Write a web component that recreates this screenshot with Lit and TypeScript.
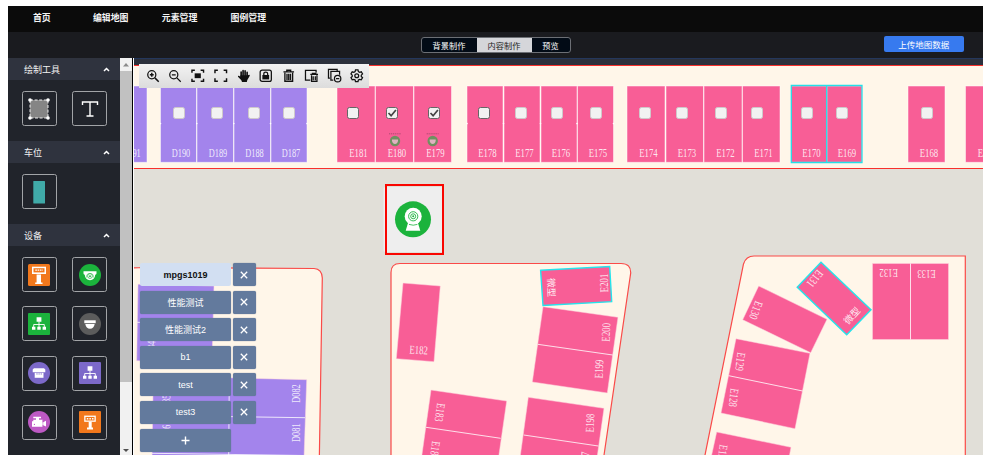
import { LitElement, html, svg, css, TemplateResult, SVGTemplateResult } from "lit";
import { customElement, state } from "lit/decorators.js";
import { classMap } from "lit/directives/class-map.js";

type Pt = [number, number];
interface Label { text: string; x: number; y: number; angle: number }
interface Check { x: number; enabled?: boolean; checked?: boolean }

const PINK = "#f85e96";
const VIOLET = "#a384ec";

/* ---------- device and tool glyphs, all drawn on a 22 x 22 grid ---------- */
const kiosk = svg`<rect width="22" height="22" rx="1.5" fill="#f2781c"/>
  <path d="M4 2.7h14v7.3H4z" fill="#fff"/><path d="M5.5 4.2h11v4.2h-11z" fill="#f2781c"/>
  <path d="M7.3 6.2h7.5" stroke="#fff" stroke-width="1.3" stroke-dasharray="1.6 .7"/>
  <path d="M8.6 10.6h4.4v7.800H14.500v1.700H7.200v-1.700h1.400z" fill="#fff"/>`;
const kiosk2 = svg`<rect width="22" height="22" rx="1" fill="#f2781c"/>
  <path d="M5.2 4.6h11.6v6.2H5.2z" fill="#fff"/><path d="M6.5 5.9h9v3.6h-9z" fill="#f2781c"/>
  <path d="M7.8 7.7h6.8" stroke="#fff" stroke-width="1.4" stroke-dasharray="1.5 1.1"/>
  <path d="M9.7 10.8h3v5.7h1.3v2H8v-2h1.7z" fill="#fff"/>`;
const network = (bg: string) => svg`<rect width="22" height="22" rx="1" fill="${bg}"/>
  <path d="M8.6 4.2h4.8v4.600H8.600zM4 13.700h3.400v3.100H4zM9.300 13.700h3.400v3.100H9.300zM14.600 13.700H18v3.100h-3.400z" fill="#fff"/>
  <path d="M11 8.500v5.500M5.700 14v-2.500h10.600V14" fill="none" stroke="#fff" stroke-width=".9"/>`;
const ICONS: Record<string, SVGTemplateResult> = {
  area: svg`<rect x="2" y="2" width="18" height="18" fill="#858585"/>
    <rect x="2" y="2" width="18" height="18" fill="none" stroke="#fff" stroke-width=".9" stroke-dasharray="3 1.6"/>
    <g fill="#fff"><circle cx="2" cy="2" r="1.8"/><circle cx="20" cy="2" r="1.8"/><circle cx="2" cy="20" r="1.8"/><circle cx="20" cy="20" r="1.8"/></g>`,
  text: svg`<path d="M3.500 7V4h15v3M11 4v14M7.500 18h7" fill="none" stroke="#fff" stroke-width="1.400"/>`,
  stall: svg`<rect x="5.300" y="0" width="11.700" height="22.500" rx=".6" fill="#40aaa8"/>`,
  kiosk,
  kiosk2,
  dome: svg`<circle cx="11" cy="11" r="11" fill="#1bb33c"/>
    <path d="M4.500 7.200h13v2.300q0 1-1.200 1.300-.7 5.400-5.300 5.400T5.700 10.800q-1.200-.3-1.200-1.300z" fill="#fff"/>
    <circle cx="11" cy="12" r="2.400" fill="none" stroke="#1bb33c" stroke-width=".7"/><circle cx="11" cy="12.200" r=".9" fill="#1bb33c"/>
    <path d="M7.600 13.500q-.6-4 3.400-4t3.400 4" fill="none" stroke="#1bb33c" stroke-width=".5"/>`,
  greenNet: network("#1bb33c"),
  violetNet: network("#7c69c9"),
  bowl: svg`<circle cx="11" cy="11" r="11" fill="#5c5c5c"/>
    <path d="M5.300 7.300h11.400v2.900H5.300z" fill="#fff"/><path d="M6.300 11h9.400q-.8 4.700-4.700 4.700T6.300 11z" fill="#fff"/>`,
  gate: svg`<circle cx="11" cy="11" r="11" fill="#7c69c9"/>
    <path d="M6 6.200h10l1.300 1.200v2.800H4.700V7.400z" fill="#fff"/><path d="M6.700 10.800h8.800v5H6.700z" fill="#fff"/>
    <path d="M9 10.800v2M11.100 10.800v2M13.200 10.800v2" stroke="#7c69c9" stroke-width=".7"/>`,
  video: svg`<circle cx="11" cy="11" r="11" fill="#bd59c4"/>
    <path d="M5.300 5.700h7.700v1.500h-2v1.500h3.600v2.800l3.400-1.700v5.800l-3.400-1.700v1.900H4v-5.600h1.300V8.700H8V7.200H5.300z" fill="#fff"/>
    <path d="M14.900 9v6.800" stroke="#bd59c4" stroke-width=".5"/><circle cx="6.400" cy="13.400" r=".6" fill="#bd59c4"/>`,
};

/* ---------- canvas tool glyphs on a 14 x 14 grid ---------- */
const TOOLS: SVGTemplateResult[] = [
  svg`<circle cx="6" cy="6" r="4.200"/><path d="M9.200 9.200l4 4M4 6h4M6 4v4" stroke-width="1.500"/>`,
  svg`<circle cx="6" cy="6" r="4.200"/><path d="M9.200 9.200l4 4M4 6h4"/>`,
  svg`<path d="M1 4V1.300h3M10 1.300h3V4M13 10v2.700h-3M4 12.700H1V10" stroke-width="1.500"/><path d="M3.800 4.500h6.400v5H3.800z" fill="#111" stroke="none"/>`,
  svg`<path d="M1 4.300v-3h3M10 1.300h3v3M13 9.700v3h-3M4 12.700H1v-3" stroke-width="1.500"/>`,
  svg`<path d="M4.300 8V3.200M6.300 7V1.700M8.400 7V2M10.500 8V3.500" stroke-width="1.700" stroke-linecap="round"/><path d="M3.500 6.500h7.800L12.500 6q1.200 0 .6 1.200L10.700 11.500 10.200 13.500H5.200L4.500 11.700 1 8q-.2-1.200 1-.9L3.500 8z" fill="#111" stroke="none"/>`,
  svg`<rect x="1.200" y="1.200" width="11.600" height="11.600" rx="2"/><path d="M3.500 6.200h7v4.600h-7z" fill="#111" stroke="none"/><path d="M5 6.500V5q0-1.700 2-1.700T9 5v1.500"/>`,
  svg`<path d="M1.500 3h11M5 2.800V1.300h4v1.500M3 4v8.700h8V4M5.200 5v6.300M7 5v6.300M8.800 5v6.300" stroke-width="1.400"/>`,
  svg`<path d="M5.500 11.500h-5v-10h11v2M5.500 5.700h8M7.700 5.500V4.600h3.500v.9M6.800 6.500v6.300h5.600V6.500M8.500 7.500v4.200M10.700 7.500v4.200"/>`,
  svg`<path d="M2 9.500H.5v-9h9V2M5.500 11.500H3v-9h9v3.500"/><circle cx="10" cy="10" r="3.300"/><path d="M8.300 10h3.400"/>`,
  svg`<path d="M5.700 1h2.600l.4 1.700 1.300.7 1.700-.5 1.300 2.200L11.700 6.400v1.400l1.300 1.200-1.300 2.200-1.700-.5-1.300.7-.4 1.700H5.700l-.4-1.700-1.300-.7-1.700.5L1 9l1.300-1.200V6.400L1 5.100l1.300-2.200 1.700.5 1.300-.7z"/><circle cx="7" cy="7" r="2"/>`,
];

@customElement("tool-palette")
class ToolPalette extends LitElement {
  static styles = css`
    :host { display: flex; width: 125px; background: #21242b; }
    .list { width: 112px; height: 397px; overflow: hidden; }
    .head { height: 22px; display: flex; align-items: center; justify-content: space-between;
      padding: 0 10px 0 16px; background: #2f333e; color: #f2f2f2; font-size: 9px; box-sizing: border-box; }
    .grid { display: grid; grid-template-columns: 35px 35px; column-gap: 15.5px; row-gap: 14.3px; padding: 11px 13.5px 15px; }
    .cell { height: 35px; box-sizing: border-box; border: 1px solid #a2a4a7; border-radius: 2.5px;
      display: flex; align-items: center; justify-content: center; }
    .bar { width: 12px; height: 397px; background: #f1f1f1; display: flex; flex-direction: column;
      justify-content: space-between; align-items: center; }
    .thumb { width: 12px; height: 311px; background: #c1c1c1; }
    .arrow { height: 13px; display: block; }
    .foot { flex: 1; display: flex; align-items: flex-end; }
    .edge { width: 1px; background: #000; }
    svg { display: block; overflow: visible; }
  `;
  private groups = [
    { title: "绘制工具", items: ["area", "text"] },
    { title: "车位", items: ["stall"] },
    { title: "设备", items: ["kiosk", "dome", "greenNet", "bowl", "gate", "violetNet", "video", "kiosk2"] },
  ];
  render() {
    return html`
      <div class="list">${this.groups.map((g) => html`
        <div class="head"><span>${g.title}</span>
          <svg width="7" height="5" viewBox="0 0 7 5"><path d="M1 4l2.500-2.500L6 4" fill="none" stroke="#fff" stroke-width="1.500"/></svg></div>
        <div class="grid">${g.items.map((i) => html`
          <div class="cell"><svg width="22" height="22" viewBox="0 0 22 22">${ICONS[i]}</svg></div>`)}</div>`)}
      </div>
      <div class="bar">
        <svg class="arrow" width="12" height="13"><path d="M3 8.500h6L6 5z" fill="#8b8b8b"/></svg>
        <div class="thumb"></div>
        <div class="foot"><svg class="arrow" width="12" height="13"><path d="M3 7h6L6 10z" fill="#505050"/></svg></div>
      </div>
      <div class="edge"></div>`;
  }
}

@customElement("parking-map")
class ParkingMap extends LitElement {
  static styles = css`
    :host { display: block; }
    svg { display: block; }
    .code { font-family: "Liberation Serif", "Noto Sans CJK SC", serif; font-size: 12px; fill: #fff; fill-opacity: .85; text-anchor: middle; }
    .size { font-family: "Noto Sans CJK SC", sans-serif; font-size: 9.5px; fill: #fff; fill-opacity: .9; text-anchor: middle; }
  `;
  // upper row: [left, right, colour, code, code centre]
  private row: [number, number, string, string, number][] = [
    [130, 147, VIOLET, "D191", 131.5], [160.5, 196.5, VIOLET, "D190", 181], [197, 233.5, VIOLET, "D189", 218],
    [234, 270.5, VIOLET, "D188", 254.5], [271, 307, VIOLET, "D187", 291],
    [337, 375, PINK, "E181", 358.5], [375.5, 413.5, PINK, "E180", 397], [414, 451.5, PINK, "E179", 435.5],
    [467, 503, PINK, "E178", 487.5], [504, 540, PINK, "E177", 524.5], [541, 577, PINK, "E176", 561], [577.5, 613.5, PINK, "E175", 598],
    [627, 665, PINK, "E174", 648.5], [666, 703.5, PINK, "E173", 687], [704, 742, PINK, "E172", 725.5], [742.5, 780, PINK, "E171", 763.5],
    [791, 826.5, PINK, "E170", 811.5], [827, 862, PINK, "E169", 847],
    [908, 945, PINK, "E168", 929], [965.5, 1003, PINK, "E167", 987],
  ];
  private checks: Check[] = [
    { x: 179 }, { x: 217 }, { x: 254 }, { x: 289 },
    { x: 353, enabled: true }, { x: 392, enabled: true, checked: true }, { x: 434, enabled: true, checked: true }, { x: 484, enabled: true },
    { x: 521 }, { x: 557 }, { x: 596 }, { x: 645 }, { x: 682 }, { x: 721 }, { x: 757 }, { x: 807 }, { x: 842 }, { x: 927 },
  ];
  private blocks: { pts: Pt[]; fill: string; cyan?: boolean }[] = [
    { fill: VIOLET, pts: [[138, 284.3], [214, 286], [212, 363], [136.7, 360.7]] },
    { fill: VIOLET, pts: [[153.3, 376], [306.7, 379.7], [304, 458], [152, 458]] },
    { fill: PINK, pts: [[403, 283], [440.3, 286], [434, 361.7], [396.3, 358.7]] },
    { fill: PINK, pts: [[431, 390], [506.7, 401], [498.5, 458], [421.5, 458]] },
    { fill: PINK, pts: [[543, 306.7], [618, 317.3], [607.3, 393], [532.3, 382]] },
    { fill: PINK, pts: [[528.3, 397.3], [604, 408.3], [597, 458], [520, 458]] },
    { fill: PINK, cyan: true, pts: [[540.6, 270.3], [609.7, 266.6], [611.7, 301.7], [543, 305.5]] },
    { fill: PINK, pts: [[758.7, 286], [827, 319.3], [810.7, 352.7], [742.7, 319.7]] },
    { fill: PINK, pts: [[736, 338.7], [810, 353.3], [795, 428.7], [721, 413]] },
    { fill: PINK, pts: [[716.7, 432], [791, 447.3], [789, 458], [711, 458]] },
    { fill: PINK, pts: [[872.5, 263.5], [948.5, 263.5], [948.5, 339.5], [872.5, 339.5]] },
    { fill: PINK, cyan: true, pts: [[821, 262.3], [871, 309.7], [846.7, 334.7], [797.2, 287.3]] },
  ];
  private labels: Label[] = [
    { text: "D084", x: 151, y: 350, angle: -88 }, { text: "D085", x: 166, y: 404, angle: -88 }, { text: "D086", x: 166, y: 434, angle: -88 },
    { text: "D082", x: 296, y: 393.5, angle: -90 }, { text: "D081", x: 296, y: 432.7, angle: -90 },
    { text: "E182", x: 418.7, y: 350, angle: 3 }, { text: "E183", x: 440, y: 412.5, angle: 98 }, { text: "E184", x: 435, y: 450.5, angle: 98 },
    { text: "E201", x: 604, y: 283, angle: -91 }, { text: "E200", x: 606, y: 332.3, angle: -88 },
    { text: "E199", x: 599, y: 369, angle: -88 }, { text: "E198", x: 590, y: 423, angle: -88 }, { text: "E197", x: 585, y: 461, angle: -88 },
    { text: "E131", x: 815, y: 278.7, angle: 128 }, { text: "E130", x: 756, y: 310.3, angle: 110 },
    { text: "E129", x: 740.3, y: 361.7, angle: 97 }, { text: "E128", x: 733.7, y: 397.7, angle: 97 }, { text: "E127", x: 722.5, y: 454, angle: 97 },
    { text: "E132", x: 888.7, y: 272.7, angle: 180 }, { text: "E133", x: 926.5, y: 273.7, angle: 180 },
  ];
  private code(l: Label) {
    return svg`<text class="code" transform="translate(${l.x} ${l.y}) rotate(${l.angle})" y="4" textLength="18.5" lengthAdjust="spacingAndGlyphs">${l.text}</text>`;
  }
  render() {
    return html`<svg width="849" height="397" viewBox="134 58 849 397">
      <rect x="134" y="58" width="849" height="397" fill="#e1dfd8"/>
      <rect x="134" y="58" width="849" height="8" fill="#2c313d"/>
      <rect x="134" y="58" width="849" height="1" fill="#24375c"/>
      <rect x="134" y="66" width="849" height="102" fill="#fff6e9"/>
      <path d="M134 65.5H983M134 168.5H983" stroke="#f8302c"/>
      <g fill="#fff6e9" stroke="#fa4a48" stroke-width="1.2">
        <path d="M128 460V268.5Q136 267.7 142 267.5L314 268.5Q322 269 322.3 278L319.3 460z"/>
        <path d="M391 460V272.5Q391 263.5 400 263.5H621Q631 263.5 630.7 273L603.3 460z"/>
        <path d="M704 460L743.5 264Q746 256 754 256H965.3V460z"/>
      </g>
      ${this.row.map(([a, b, c, t, x]) => svg`
        <rect x="${a}" y="86" width="${b - a}" height="76.3" fill="${c}" stroke="#fff" stroke-opacity=".55" stroke-width=".9"/>
        ${this.code({ text: t, x, y: 153, angle: 0 })}`)}
      <g fill="#fff">${[160.5, 196.8, 233.8, 270.5, 307, 467, 503.5, 540.5, 577, 613.5].map((x) => svg`<circle cx="${x}" cy="123.6" r=".8"/>`)}</g>
      <path d="M791.3 85.5H862V162.5H791.3zM826.7 85.5V162.5" fill="none" stroke="#25dfe8" stroke-width="1.3"/>
      ${this.checks.map((c) => svg`
        <rect x="${c.x - 5.5}" y="107.5" width="11" height="11" rx="2" fill="#f2f2f2" stroke="${c.enabled ? "#666" : "#cfc9cb"}"/>
        ${c.checked ? svg`<path d="M${c.x - 3.5} 113l2.6 2.7 4.8-5.7" fill="none" stroke="#444" stroke-width="1.7"/>` : ""}`)}
      ${[395, 432.7].map((x) => svg`
        <path d="M${x - 6} 133.8h12" stroke="#b04870" stroke-width="1" stroke-dasharray="1.2 .7"/>
        <circle cx="${x}" cy="141" r="5.2" fill="#6f9060"/>
        <path d="M${x - 3} 139.5h6v1.5q-.7 3-3 3t-3-3z" fill="#e0b3c0"/>`)}
      ${this.blocks.map((b) => svg`<polygon points="${b.pts.map((p) => p.join(",")).join(" ")}" fill="${b.fill}"
        stroke="${b.cyan ? "#25e4ec" : "#ffd5df"}" stroke-width="${b.cyan ? 1.4 : 0.5}"/>`)}
      <path d="M137.3 322.3L213 324M229.3 376L228.7 455M152 415.5L305 417.7M152 453.3L304 455.5M426 427.3L500.7 438.3M537.7 344.3L612.7 355M523.7 435L598.3 446M728.7 375.7L802.7 391M910.5 263.5V339.5" stroke="#fff" stroke-opacity=".8"/>
      ${this.labels.map((l) => this.code(l))}
      <text class="size" transform="translate(551.3 287.7) rotate(88)" y="3.5">微型</text>
      <text class="size" transform="translate(852 315.7) rotate(-47)" y="3.5">微型</text>
      <rect x="383.5" y="187" width="60" height="65" rx="2" fill="#eee"/>
      <rect x="386" y="185" width="57" height="69" fill="#eee" stroke="#f90600" stroke-width="2"/>
      <path d="M387 186h55v1h-55zM387 252h55v1h-55z" fill="#e1dfd8"/>
      <circle cx="413" cy="219.3" r="18" fill="#1bb33c"/>
      <path d="M408 223h10l2.300 7.800h-14.600z" fill="#fff"/>
      <circle cx="413.2" cy="216.3" r="8.5" fill="#fff"/>
      <g fill="none" stroke="#1bb33c"><path d="M409 224.400q4.200 1.600 8.400 0" stroke-width=".8"/><circle cx="413.2" cy="216.3" r="4.6" stroke-width=".9"/><circle cx="413.2" cy="216.3" r="2.5" stroke-width=".9"/></g>
      <circle cx="413.2" cy="216.3" r="1" fill="#1bb33c"/>
    </svg>`;
  }
}

@customElement("floor-list")
class FloorList extends LitElement {
  static styles = css`
    :host { display: flex; flex-direction: column; gap: 4.6px; font-family: "Liberation Sans", "Noto Sans CJK SC", sans-serif; font-size: 9px; color: #fff; }
    .row { display: flex; gap: 2px; height: 23px; }
    .name, .close { display: flex; align-items: center; justify-content: center; background: #637a9d; border-radius: 2px; box-shadow: 0 0 1px #536987; }
    .name { width: 91px; }
    .close { width: 22.5px; }
    .on { background: #d2dff2; color: #111; font-weight: bold; box-shadow: none; }
  `;
  @state() private active = 0;
  private floors = ["mpgs1019", "性能测试", "性能测试2", "b1", "test", "test3"];
  render(): TemplateResult {
    return html`${this.floors.map((f, i) => html`
      <div class="row">
        <div class=${classMap({ name: true, on: i === this.active })} @click=${() => (this.active = i)}>${f}</div>
        <div class="close"><svg width="8" height="8" viewBox="0 0 8 8"><path d="M.8.8l6.4 6.4M7.2.8L.8 7.2" stroke="#fff" stroke-width="1.3"/></svg></div>
      </div>`)}
      <div class="row"><div class="name"><svg width="9" height="9" viewBox="0 0 9 9"><path d="M4.5.5v8M.5 4.5h8" stroke="#fff" stroke-width="1.4"/></svg></div></div>`;
  }
}

@customElement("app-root")
class AppRoot extends LitElement {
  static styles = css`
    :host { display: block; width: 984px; height: 455px; overflow: hidden; background: #fff; box-sizing: border-box; padding: 6px 1px 0 8px;
      font-family: "Noto Sans CJK SC", sans-serif; }
    .nav { height: 26px; box-sizing: border-box; background: #0b0b0b; color: #f4f4f4; display: flex; align-items: center;
      padding: 0 25px 3px; font-size: 8.9px; font-weight: 700; }
    .home { width: 60px; }
    .item { width: 68.8px; }
    .bar { height: 26px; background: #1a1b1f; display: grid; grid-template-columns: 1fr auto 1fr; align-items: center; }
    .tabs { grid-column: 2; display: flex; width: 150px; height: 16px; box-sizing: border-box; border: 1px solid #6c6f75; border-radius: 3px;
      overflow: hidden; font-size: 8.2px; color: #fff; background: #020b16; }
    .tab { width: 55px; padding-bottom: 1px; display: flex; align-items: center; justify-content: center; }
    .tab.last { width: 38px; }
    .tab.on { background: #d5d6da; color: #222; }
    .upload { justify-self: end; margin: 0 19.5px 2px 0; width: 79.5px; height: 16px; border-radius: 2px; background: #377aef; color: #fff;
      font-size: 8.5px; display: flex; align-items: center; justify-content: center; }
    .main { display: flex; height: 397px; }
    .canvas { position: relative; width: 849px; margin-left: 1px; }
    .tools { position: absolute; left: 5px; top: 6px; width: 230px; height: 24px; box-sizing: border-box; padding: 0 5px 0 6.5px;
      display: flex; align-items: center; justify-content: space-between; background: linear-gradient(#f3f3f3, #dcdcdc); }
    .tools svg { display: block; fill: none; stroke: #111; stroke-width: 1.3; overflow: visible; }
    floor-list { position: absolute; left: 6px; top: 205px; }
  `;
  render() {
    return html`
      <div class="nav"><span class="home">首页</span>${["编辑地图", "元素管理", "图例管理"].map((t) => html`<span class="item">${t}</span>`)}</div>
      <div class="bar">
        <div class="tabs"><div class="tab">背景制作</div><div class="tab on">内容制作</div><div class="tab last">预览</div></div>
        <div class="upload">上传地图数据</div>
      </div>
      <div class="main">
        <tool-palette></tool-palette>
        <div class="canvas">
          <parking-map></parking-map>
          <div class="tools">${TOOLS.map((t) => html`<svg width="13.500" height="13.500" viewBox="0 0 14 14">${t}</svg>`)}</div>
          <floor-list></floor-list>
        </div>
      </div>`;
  }
}
